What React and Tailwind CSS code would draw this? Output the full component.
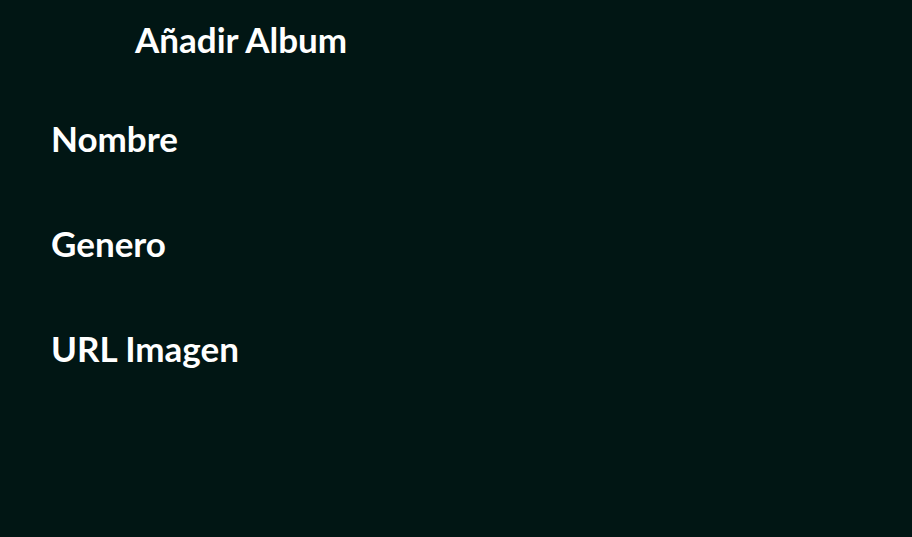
export default function App() {
  const fields = ["Nombre", "Genero", "URL Imagen"];
  return (
    <div className="min-h-screen w-full bg-[#011614] text-white font-['Lato',sans-serif] font-bold">
      <h1 className="pl-[135px] pt-[15px] text-[35px] leading-[48px]">Añadir Album</h1>
      <div className="pl-[51px] pt-[55px] flex flex-col gap-[65px]">
        {fields.map(f => (
          <label key={f} className="text-[35px] leading-[40px]">{f}</label>
        ))}
      </div>
    </div>
  );
}
